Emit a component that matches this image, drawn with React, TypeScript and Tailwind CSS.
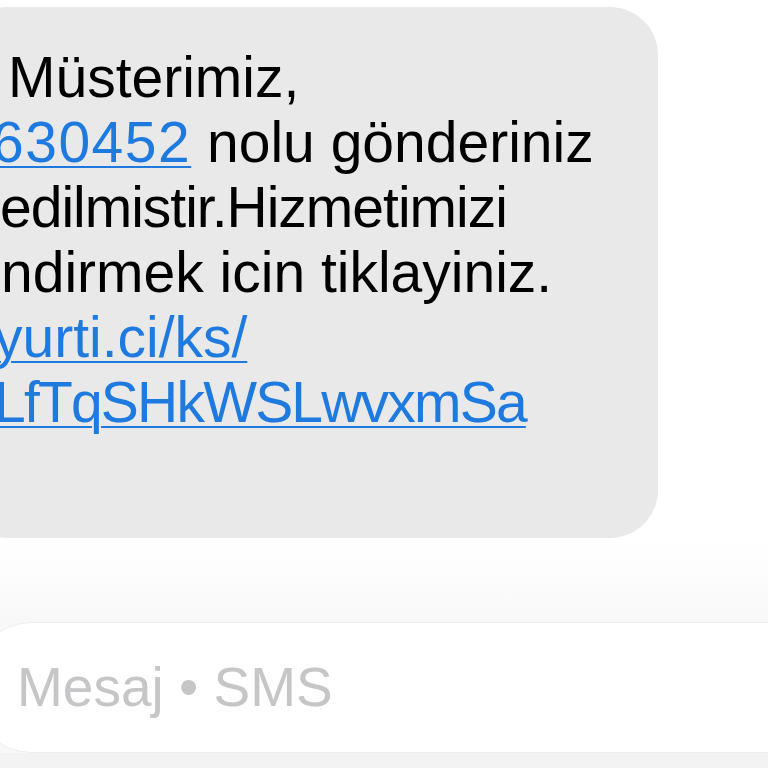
import React from 'react';

const linkCls = 'text-[#1f7ae0] underline decoration-2 underline-offset-[4px]';

const MessageBubble = () => {
  return (
    <div className="mt-[7px] -ml-[40px] w-[698px] shrink-0 self-start rounded-[48px] bg-[#e9e9ea] pl-[40px] pt-[38px] pb-[103px] text-[57px] leading-[65px] text-black">
      {/* incoming sms, left part cut off by the screenshot */}
      <div className="ml-[8px] whitespace-nowrap">Müsterimiz,</div>
      <div className="-ml-[8px] whitespace-nowrap">
        <span className={`${linkCls} tracking-[1.5px]`}>630452</span> nolu gönderiniz
      </div>
      <div className="whitespace-nowrap tracking-[-1px]">edilmistir.Hizmetimizi</div>
      <div className="ml-[1px] whitespace-nowrap">ndirmek icin tiklayiniz.</div>
      <div className="-ml-[6px] whitespace-nowrap">
        <span className={linkCls}>yurti.ci/ks/</span>
      </div>
      <div className="-ml-[6px] whitespace-nowrap">
        <span className={`${linkCls} tracking-[-1.8px]`}>LfTqSHkWSLwvxmSa</span>
      </div>
    </div>
  );
};

const Composer = () => {
  return (
    <div className="flex flex-1 flex-col">
      <div className="h-[84px] bg-linear-to-b from-white via-[#fcfcfc] to-[#f8f8f8]" />
      <div className="flex h-[131px] bg-[#f8f8f8]">
        <div className="-ml-[30px] flex w-[860px] shrink-0 items-center rounded-[62px] border border-[#eeeeee] bg-white pl-[46px]">
          <span className="text-[55px] text-[#c6c6c8]">Mesaj • SMS</span>
        </div>
      </div>
      <div className="h-[15px] bg-[#f3f3f3]" />
    </div>
  );
};

const App = () => {
  return (
    <div className="flex h-[768px] w-[768px] flex-col overflow-hidden bg-white font-['Liberation_Sans',Arial,sans-serif]">
      <MessageBubble />
      <Composer />
    </div>
  );
};

export default App;
